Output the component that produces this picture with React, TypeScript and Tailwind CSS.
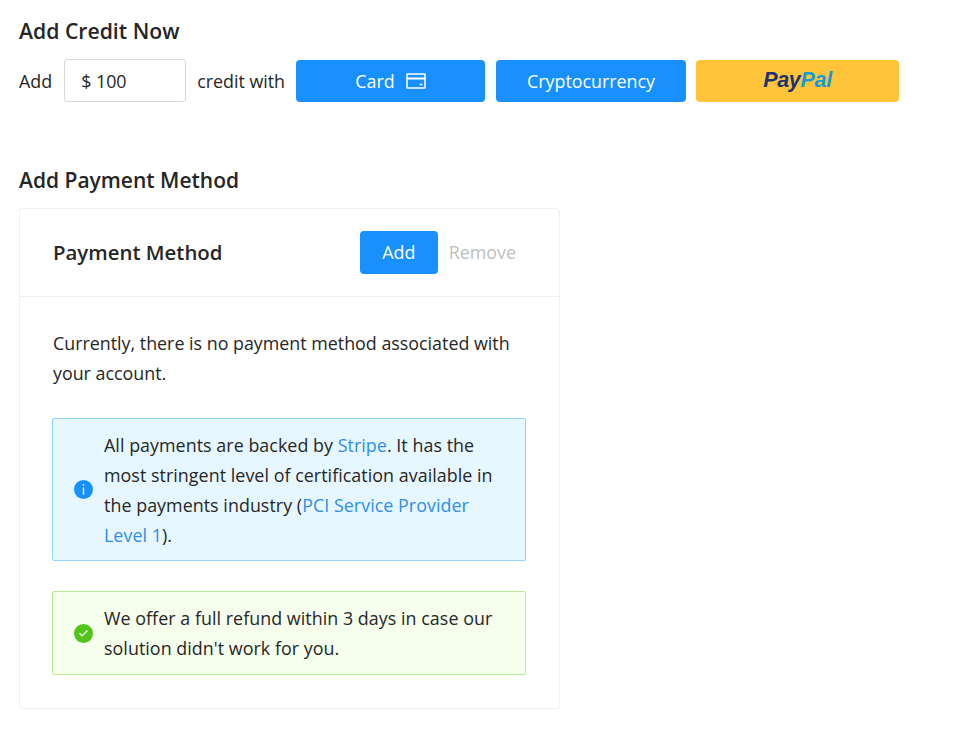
import { Check } from 'lucide-react';

const CardIcon = () => (
	<svg width="20" height="16" viewBox="0 0 20 16" fill="none" stroke="white" strokeWidth="1.5">
		<rect x="1" y="1" width="18" height="14" rx="0.5" />
		<path d="M1 5.5h18" strokeWidth="2" />
		<path d="M13.5 11.5h3" strokeWidth="1.5" />
	</svg>
);

const App = () => {
	return (
		<div className="h-[733px] w-[957px] overflow-hidden bg-white pl-[19px] pt-[16px] font-['Open_Sans',sans-serif] text-[17.85px] text-[#262626]">
			<h2 className="text-[21.2px] font-semibold leading-[30px] text-[#262626]">Add Credit Now</h2>

			<div className="mt-[13px] flex items-center">
				<span className="pt-[2px]">Add</span>
				<div className="ml-[12px] flex h-[43px] w-[122px] items-center rounded-[3px] border border-[#d9d9d9] pl-[16px] pt-[2px]">$ 100</div>
				<span className="ml-[11px] pt-[2px]">credit with</span>
				<button className="ml-[11px] flex h-[42px] w-[189px] items-center justify-center gap-[11px] rounded-[4px] bg-[#1890ff] pt-[1px] text-white">
					Card
					<CardIcon />
				</button>
				<button className="ml-[11px] flex h-[42px] w-[190px] items-center justify-center rounded-[4px] bg-[#1890ff] pt-[1px] text-white">Cryptocurrency</button>
				<button className="ml-[10px] flex h-[42px] w-[203px] items-center justify-center rounded-[4px] bg-[#ffc439] font-['Liberation_Sans',sans-serif] text-[21.5px] font-bold italic tracking-[-0.3px]">
					<span className="text-[#1c3272]">Pay</span>
					<span className="text-[#179bd7]">Pal</span>
				</button>
			</div>

			<h2 className="mt-[63px] text-[21px] font-semibold leading-[30px]">Add Payment Method</h2>

			<div className="mt-[13px] h-[501px] w-[541px] rounded-[3px] border border-[#f0f0f0]">
				<div className="flex h-[88px] items-center border-b border-[#f0f0f0] pl-[33px] pr-[43px]">
					<span className="text-[20.4px] font-semibold">Payment Method</span>
					<button className="ml-auto h-[43px] w-[78px] rounded-[4px] bg-[#1890ff] text-white">Add</button>
					<span className="ml-[11px] text-[#bfbfbf]">Remove</span>
				</div>

				<div className="pl-[33px] pr-[32px] pt-[31px] leading-[30px]">
					<p>Currently, there is no payment method associated with your account.</p>

					<div className="-ml-[1px] mt-[30px] flex h-[143px] w-[474px] items-center rounded-[2px] border border-[#91d5ff] bg-[#e6f7ff] pl-[21px] pr-[20px]">
						<div className="flex h-[19px] w-[19px] shrink-0 items-center justify-center rounded-full bg-[#1890ff]">
							<svg width="3" height="11" viewBox="0 0 3 11" fill="white">
								<rect x="0.8" y="0" width="1.4" height="1.6" />
								<rect x="0.8" y="3.6" width="1.4" height="7" />
							</svg>
						</div>
						<p className="ml-[11px] tracking-[0.05px]">
							All payments are backed by <a className="text-[#2f8fe8]">Stripe</a>. It has the most stringent level of certification available in the payments industry (<a className="text-[#2f8fe8]">PCI Service Provider Level 1</a>).
						</p>
					</div>

					<div className="-ml-[1px] mt-[30px] flex h-[84px] w-[474px] items-center rounded-[2px] border border-[#b7eb8f] bg-[#f6ffed] pl-[21px] pr-[20px]">
						<div className="flex h-[19px] w-[19px] shrink-0 items-center justify-center rounded-full bg-[#52c41a]">
							<Check size={11} color="white" strokeWidth={2.5} />
						</div>
						<p className="ml-[11px] tracking-[0.05px]">We offer a full refund within 3 days in case our solution didn't work for you.</p>
					</div>
				</div>
			</div>
		</div>
	);
};

export default App;
